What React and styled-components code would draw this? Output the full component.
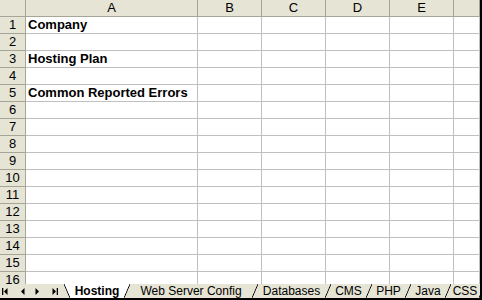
import React from 'react';
import styled, { createGlobalStyle, css } from 'styled-components';

const GlobalStyle = createGlobalStyle`
    html, body {
        margin: 0;
        padding: 0;
        background: #ffffff;
    }
    body {
        font-family: "Liberation Sans", Arial, sans-serif;
    }
`;

const BEIGE = '#e5e4d5';
const GRID = '#c0c0c0';
const HEAD_LINE = '#a6a597';

const Frame = styled.div`
    width: 482px;
    height: 300px;
    box-sizing: border-box;
    border-right: 2px solid #000;
    border-bottom: 2px solid #000;
    display: flex;
    flex-direction: column;
    overflow: hidden;
    background: #fff;
`;

const Sheet = styled.div`
    flex: 1;
    overflow: hidden;
    display: grid;
    grid-template-columns: 26px 172px 64px 64px 64px 64px 1fr;
    grid-auto-rows: 17px;
`;

const Corner = styled.div`
    background: ${BEIGE};
    border-right: 1px solid ${HEAD_LINE};
    border-bottom: 1px solid ${HEAD_LINE};
`;

const ColHead = styled.div`
    background: ${BEIGE};
    border-right: 1px solid ${HEAD_LINE};
    border-bottom: 1px solid ${HEAD_LINE};
    font-size: 13px;
    line-height: 16px;
    text-align: center;
    color: #000;
`;

const RowHead = styled.div`
    background: ${BEIGE};
    border-right: 1px solid ${HEAD_LINE};
    border-bottom: 1px solid ${HEAD_LINE};
    font-size: 13px;
    line-height: 16px;
    text-align: center;
    color: #000;
`;

const Cell = styled.div`
    border-right: 1px solid ${GRID};
    border-bottom: 1px solid ${GRID};
    font-size: 13px;
    line-height: 16px;
    padding-left: 2px;
    white-space: nowrap;
    overflow: visible;
    color: #000;
    ${p => p.bold && css`font-weight: bold;`}
`;

const TabBar = styled.div`
    height: 14px;
    flex: none;
    display: flex;
    align-items: stretch;
    background: ${BEIGE};
    overflow: hidden;
`;

const Nav = styled.div`
    flex: none;
    width: 64px;
    display: flex;
    align-items: center;
    justify-content: space-between;
    padding: 0 6px 0 2px;
    box-sizing: border-box;
`;

const NavButton = styled.svg`
    width: 6px;
    height: 7px;
    display: block;
    flex: none;
`;

const Slant = styled.div`
    width: 6px;
    flex: none;
    ${p => p.dir === 'back'
        ? css`background: linear-gradient(to top right, ${BEIGE} calc(50% - 0.8px), #000 50%, ${p.active ? '#fff' : BEIGE} calc(50% + 0.8px));`
        : css`background: linear-gradient(to bottom right, ${p.active ? '#fff' : BEIGE} calc(50% - 0.8px), #000 50%, ${BEIGE} calc(50% + 0.8px));`}
`;

const Tab = styled.div`
    flex: none;
    width: ${p => p.width}px;
    text-align: center;
    font-size: 12px;
    line-height: 14px;
    color: #000;
    background: ${p => p.active ? '#fff' : 'transparent'};
    font-weight: ${p => p.active ? 'bold' : 'normal'};
    white-space: nowrap;
`;

const columns = ['A', 'B', 'C', 'D', 'E', ''];
const labels = { 1: 'Company', 3: 'Hosting Plan', 5: 'Common Reported Errors' };
const tabs = [
    { name: 'Hosting', width: 54 },
    { name: 'Web Server Config', width: 122 },
    { name: 'Databases', width: 67 },
    { name: 'CMS', width: 35 },
    { name: 'PHP', width: 33 },
    { name: 'Java', width: 34 },
    { name: 'CSS', width: 28 },
];

function NavIcon({ kind }) {
    const left = kind === 'first' || kind === 'prev';
    const bar = kind === 'first' || kind === 'last';
    return (
        <NavButton viewBox="0 0 6 7">
            {left
                ? <polygon points="5.5,0 5.5,7 2,3.5" fill="#000" />
                : <polygon points="0.5,0 0.5,7 4,3.5" fill="#000" />}
            {bar && (left
                ? <rect x="0" y="0" width="1.3" height="7" fill="#000" />
                : <rect x="4.7" y="0" width="1.3" height="7" fill="#000" />)}
        </NavButton>
    );
}

function App() {
    const rows = Array.from({ length: 16 }, (_, i) => i + 1);
    return (
        <Frame>
            <GlobalStyle />
            <Sheet>
                <Corner />
                {columns.map((c, i) => <ColHead key={i}>{c}</ColHead>)}
                {rows.map(r => (
                    <React.Fragment key={r}>
                        <RowHead>{r}</RowHead>
                        <Cell bold>{labels[r]}</Cell>
                        {columns.slice(1).map((_, i) => <Cell key={i} />)}
                    </React.Fragment>
                ))}
            </Sheet>
            <TabBar>
                <Nav>
                    <NavIcon kind="first" />
                    <NavIcon kind="prev" />
                    <NavIcon kind="next" />
                    <NavIcon kind="last" />
                </Nav>
                {tabs.map((t, i) => (
                    <React.Fragment key={t.name}>
                        {i === 0 && <Slant dir="back" active />}
                        <Tab active={i === 0} width={t.width}>{t.name}</Tab>
                        <Slant dir="fwd" active={i === 0} />
                    </React.Fragment>
                ))}
            </TabBar>
        </Frame>
    );
}

export default App;
